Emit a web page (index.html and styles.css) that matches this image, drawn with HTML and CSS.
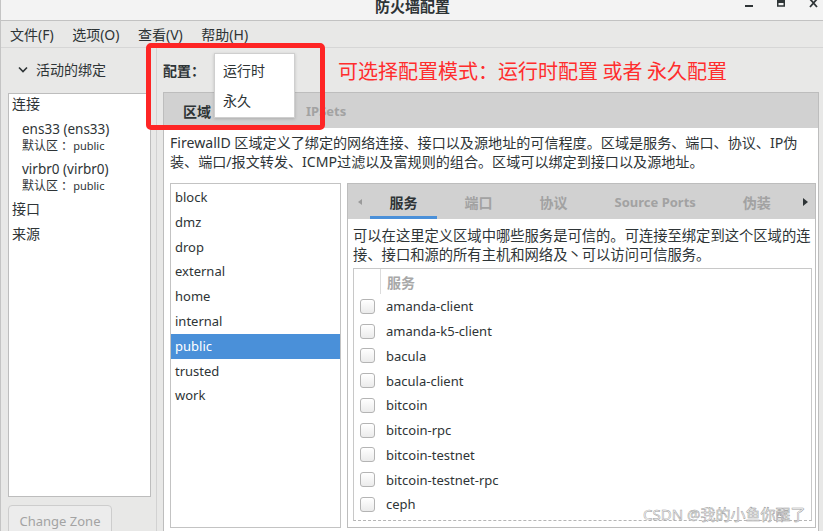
FILE: index.html
```html
<!DOCTYPE html>
<html lang="zh-CN">
<head>
<meta charset="utf-8">
<title>防火墙配置</title>
<link rel="stylesheet" href="styles.css">
</head>
<body>
<div class="window">
  <header class="titlebar">
    <span class="title">防火墙配置</span>
    <svg class="wm-buttons" width="80" height="12" viewBox="0 0 80 12">
      <rect x="5" y="5" width="8" height="2" fill="#2e3436"/>
      <rect x="37.75" y="-2" width="6.5" height="8" fill="none" stroke="#2e3436" stroke-width="1.5"/>
      <rect x="37" y="0" width="8" height="3" fill="#2e3436"/>
      <path d="M70 -1 L77 7 M77 -1 L70 7" stroke="#2e3436" stroke-width="1.8" fill="none"/>
    </svg>
  </header>

  <nav class="menubar">
    <span>文件(F)</span><span>选项(O)</span><span>查看(V)</span><span>帮助(H)</span>
  </nav>

  <div class="content">
    <aside class="sidebar">
      <div class="side-head">
        <svg class="chevron" width="10" height="7" viewBox="0 0 10 7"><path d="M1 1.5 L5 5.5 L9 1.5" fill="none" stroke="#2e3436" stroke-width="1.6"/></svg>
        <span>活动的绑定</span>
      </div>
      <div class="bindings">
        <div class="group">连接</div>
        <div class="conn">
          <div class="conn-name">ens33 (ens33)</div>
          <div class="conn-zone">默认区 ：<span class="zone-name">public</span></div>
        </div>
        <div class="conn">
          <div class="conn-name">virbr0 (virbr0)</div>
          <div class="conn-zone">默认区 ：<span class="zone-name">public</span></div>
        </div>
        <div class="group group-gap">接口</div>
        <div class="group group-gap">来源</div>
      </div>
      <button class="change-zone">Change Zone</button>
    </aside>

    <main class="main">
      <div class="config-row">
        <span class="config-label">配置：</span>
        <span class="note">可选择配置模式：运行时配置 或者 永久配置</span>
      </div>
      <div class="notebook">
        <div class="outer-tabs">
          <span class="otab otab-active">区域</span>
          <span class="otab otab-dim">IPSets</span>
        </div>
        <div class="page">
          <p class="desc desc-outer">FirewallD 区域定义了绑定的网络连接、接口以及源地址的可信程度。区域是服务、端口、协议、IP伪<br>装、端口/报文转发、ICMP过滤以及富规则的组合。区域可以绑定到接口以及源地址。</p>
          <div class="split">
            <ul class="zones">
              <li>block</li>
              <li>dmz</li>
              <li>drop</li>
              <li>external</li>
              <li>home</li>
              <li>internal</li>
              <li class="selected">public</li>
              <li>trusted</li>
              <li>work</li>
            </ul>
            <div class="inner-nb">
              <div class="inner-tabs">
                <span class="arrow-box"><span class="arrow-left"></span></span>
                <span class="itab itab-active">服务</span>
                <span class="itab">端口</span>
                <span class="itab">协议</span>
                <span class="itab itab-latin">Source Ports</span>
                <span class="itab">伪装</span>
                <span class="arrow-box arrow-box-right"><span class="arrow-right"></span></span>
              </div>
              <div class="inner-page">
                <p class="desc desc-inner">可以在这里定义区域中哪些服务是可信的。可连接至绑定到这个区域的连<br>接、接口和源的所有主机和网络及丶可以访问可信服务。</p>
                <div class="table">
                  <div class="thead"><span class="cb-col"></span><span class="th">服务</span></div>
                  <div class="row"><span class="cb"></span>amanda-client</div>
                  <div class="row"><span class="cb"></span>amanda-k5-client</div>
                  <div class="row"><span class="cb"></span>bacula</div>
                  <div class="row"><span class="cb"></span>bacula-client</div>
                  <div class="row"><span class="cb"></span>bitcoin</div>
                  <div class="row"><span class="cb"></span>bitcoin-rpc</div>
                  <div class="row"><span class="cb"></span>bitcoin-testnet</div>
                  <div class="row"><span class="cb"></span>bitcoin-testnet-rpc</div>
                  <div class="row"><span class="cb"></span>ceph</div>
                </div>
              </div>
            </div>
          </div>
        </div>
      </div>
    </main>
  </div>

  <div class="popup">
    <div class="popup-item">运行时</div>
    <div class="popup-item">永久</div>
  </div>
  <div class="redbox"></div>
  <div class="watermark">CSDN @我的小鱼你醒了</div>
</div>
</body>
</html>
```

FILE: styles.css
```css
* { box-sizing: border-box; margin: 0; padding: 0; }

html, body {
  width: 823px;
  height: 531px;
  overflow: hidden;
}

body {
  font-family: "Noto Sans", "Noto Sans CJK SC", sans-serif;
  font-size: 13px;
  color: #2e3436;
  background: #e8e8e7;
}

.window {
  position: relative;
  width: 823px;
  height: 531px;
  display: flex;
  flex-direction: column;
  border-left: 1px solid #c4c4c4;
  overflow: hidden;
}

/* title bar */
.titlebar {
  height: 21px;
  flex: none;
  display: grid;
  grid-template-columns: 1fr auto 1fr;
  align-items: start;
  background: #f3f3f3;
  border-bottom: 1px solid #c2c2c2;
}
.title {
  grid-column: 2;
  font-family: "Noto Sans CJK SC", sans-serif;
  font-weight: bold;
  font-size: 15px;
  line-height: 15px;
  margin-top: -2px;
  margin-left: 1px;
  color: #2e3436;
  white-space: nowrap;
}
.wm-buttons {
  grid-column: 3;
  justify-self: end;
  margin-right: 3px;
}

/* menubar */
.menubar {
  height: 27px;
  flex: none;
  display: flex;
  align-items: center;
  gap: 18.5px;
  padding-left: 9px;
  font-size: 14px;
  border-bottom: 1px solid #d6d6d6;
  white-space: nowrap;
}

.content {
  flex: 1;
  min-height: 0;
  display: flex;
}

/* sidebar */
.sidebar {
  width: 156px;
  flex: none;
  display: flex;
  flex-direction: column;
  border-right: 1px solid #d2d2d2;
}
.side-head {
  height: 45px;
  flex: none;
  display: flex;
  align-items: center;
  padding-left: 17px;
  padding-bottom: 3px;
  font-size: 14px;
}
.chevron { margin-right: 8px; }
.bindings {
  margin-left: 7px;
  width: 143px;
  height: 404px;
  flex: none;
  background: #fff;
  border: 1px solid #bdbdbd;
  padding-top: 0;
}
.group {
  font-size: 14px;
  line-height: 20px;
  padding-left: 3px;
}
.group-gap { margin-top: 5px; }
.conn { padding: 6px 0 0 13px; white-space: nowrap; }
.conn-name { font-size: 13.5px; line-height: 18px; }
.conn-zone { font-size: 12px; line-height: 16px; }
.zone-name { font-size: 11px; }
.change-zone {
  margin: 8px 0 0 7px;
  width: 104px;
  height: 32px;
  flex: none;
  font-family: "Noto Sans", sans-serif;
  font-size: 13px;
  color: #a3a3a3;
  background: #ececec;
  border: 1px solid #cdcdcd;
  border-radius: 4px;
  text-align: center;
}

/* main */
.main {
  flex: 1;
  display: flex;
  flex-direction: column;
  padding-left: 6px;
  padding-right: 4px;
}
.config-row {
  height: 44px;
  flex: none;
  display: flex;
  align-items: center;
  white-space: nowrap;
}
.config-label {
  font-family: "Noto Sans CJK SC", sans-serif;
  font-weight: bold;
  font-size: 14px;
}
.note {
  margin-left: 133px;
  font-family: "Noto Sans CJK SC", sans-serif;
  font-size: 20px;
  color: #ff2d2d;
}

.notebook {
  flex: 1;
  display: flex;
  flex-direction: column;
  border: 1px solid #bdbdbd;
  border-bottom: none;
  background: #fff;
}
.outer-tabs {
  height: 35px;
  flex: none;
  display: flex;
  align-items: center;
  background: #d1d1d1;
  white-space: nowrap;
}
.otab { font-weight: bold; font-size: 14px; }
.otab-active { margin-left: 19px; color: #2e3436; }
.otab-dim { margin-left: 95px; color: #a2a2a2; font-size: 13px; }

.page {
  flex: 1;
  padding: 5px 2px 0 6px;
}
.desc {
  line-height: 19px;
  white-space: nowrap;
}
.desc-outer { font-size: 14.1px; }
.desc-inner { font-size: 14.3px; line-height: 18.5px; }

.split {
  margin-top: 12px;
  height: 345px;
  display: flex;
  gap: 6px;
}
.zones {
  width: 171px;
  flex: none;
  list-style: none;
  border: 1px solid #c3c3c3;
  padding-top: 1px;
}
.zones li {
  height: 24.8px;
  line-height: 24.8px;
  padding-left: 4px;
  font-size: 13px;
}
.zones li.selected {
  background: #4a90d9;
  color: #fff;
}

.inner-nb {
  flex: 1;
  min-width: 0;
  display: flex;
  flex-direction: column;
  border: 1px solid #bdbdbd;
}
.inner-tabs {
  height: 35px;
  flex: none;
  display: flex;
  align-items: stretch;
  gap: 8px;
  background: #d1d1d1;
  white-space: nowrap;
}
.arrow-box {
  width: 14px;
  flex: none;
  display: flex;
  align-items: center;
  justify-content: flex-end;
}
.arrow-box-right {
  margin-left: auto;
  margin-right: 6px;
  width: 8px;
  justify-content: center;
}
.arrow-left {
  width: 0; height: 0;
  border-top: 3.5px solid transparent;
  border-bottom: 3.5px solid transparent;
  border-right: 4px solid #9a9a9a;
}
.arrow-right {
  width: 0; height: 0;
  border-top: 4px solid transparent;
  border-bottom: 4px solid transparent;
  border-left: 5px solid #2e3436;
}
.itab {
  flex: none;
  display: flex;
  align-items: center;
  padding: 0 19.5px;
  font-weight: bold;
  font-size: 14px;
  color: #a2a2a2;
}
.itab-latin { font-size: 13px; }
.itab-active {
  color: #2e3436;
  box-shadow: inset 0 -3px 0 #4a90d9;
}

.inner-page {
  flex: 1;
  min-height: 0;
  display: flex;
  flex-direction: column;
  padding: 8px 3px 6px 5px;
}
.inner-page .desc { margin-bottom: 4px; }

.table {
  flex: 1;
  min-height: 0;
  overflow: hidden;
  border: 1px solid #c8c8c8;
  border-bottom: 1px dashed #b5b5b5;
}
.thead {
  height: 25px;
  display: flex;
  align-items: stretch;
}
.cb-col {
  width: 27px;
  border-right: 1px solid #dcdcdc;
}
.th {
  display: flex;
  align-items: center;
  padding-left: 6px;
  font-size: 14px;
  font-weight: bold;
  color: #a8a8a8;
}
.row {
  height: 24.75px;
  display: flex;
  align-items: center;
  padding-left: 6px;
  font-size: 13px;
  white-space: nowrap;
}
.cb {
  width: 15px;
  height: 15px;
  flex: none;
  margin-right: 11px;
  border: 1px solid #b4b4b4;
  border-radius: 3px;
  background: linear-gradient(#ffffff, #ebebeb);
}

/* overlays */
.popup {
  position: absolute;
  left: 213px;
  top: 53px;
  width: 81px;
  height: 65px;
  padding-top: 2px;
  background: #fff;
  border: 1px solid #cfcfcf;
  box-shadow: 0 1px 3px rgba(0,0,0,0.18);
}
.popup-item {
  height: 30px;
  line-height: 30px;
  padding-left: 8px;
  font-size: 14px;
}
.redbox {
  position: absolute;
  left: 145px;
  top: 43px;
  width: 179px;
  height: 87px;
  border: 5px solid #fe2525;
  border-radius: 5px;
}
.watermark {
  position: absolute;
  left: 642px;
  top: 505px;
  font-size: 15px;
  line-height: 18px;
  color: rgba(255,255,255,0.85);
  -webkit-text-stroke: 0.5px #9a9a9a;
  white-space: nowrap;
}
```
